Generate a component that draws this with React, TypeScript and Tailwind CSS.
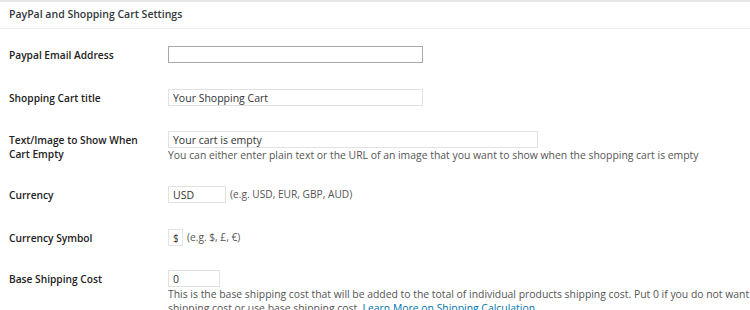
export default function App() {
  return (
    <div className="w-[750px] h-[310px] overflow-hidden bg-white text-[#23282d] font-['Open_Sans',sans-serif]">
      {/* Panel header */}
      <div className="border-t-2 border-[#e5e5e5]">
        <div className="h-[27px] pl-[9px] flex items-center border-b border-[#eeeeee] text-[10.5px] font-semibold text-[#32373c]">
          PayPal and Shopping Cart Settings
        </div>
      </div>

      <div className="flex flex-col">
        <Row label="Paypal Email Address" top="mt-[17px]">
          <input className="w-[255px] h-[17px] border border-[#aaaaaa] bg-white px-[5px] text-[10.5px] outline-none" />
        </Row>

        <Row label="Shopping Cart title" top="mt-[26px]">
          <Field width="w-[255px]" value="Your Shopping Cart" />
        </Row>

        <Row label={<>Text/Image to Show When<br />Cart Empty</>} top="mt-[25px]">
          <Field width="w-[370px]" value="Your cart is empty" />
          <p className="text-[10.4px] leading-[14px] text-[#555] whitespace-nowrap">
            You can either enter plain text or the URL of an image that you want to show when the shopping cart is empty
          </p>
        </Row>

        <Row label="Currency" top="mt-[24px]">
          <div className="flex items-center gap-[4px]">
            <Field width="w-[58px]" value="USD" />
            <span className="text-[10.2px] text-[#555]">(e.g. USD, EUR, GBP, AUD)</span>
          </div>
        </Row>

        <Row label="Currency Symbol" top="mt-[26px]">
          <div className="flex items-center gap-[4px]">
            <Field width="w-[15px]" value="$" />
            <span className="text-[10.2px] text-[#555]">(e.g. $, £, €)</span>
          </div>
        </Row>

        <Row label="Base Shipping Cost" top="mt-[24px]">
          <Field width="w-[52px]" value="0" />
          <p className="text-[10.4px] leading-[14px] text-[#555] whitespace-nowrap">
            This is the base shipping cost that will be added to the total of individual products shipping cost. Put 0 if you do not want to charge base
            <br />
            shipping cost or use base shipping cost.{" "}
            <a className="text-[#0073aa]" href="#">Learn More on Shipping Calculation</a>
          </p>
        </Row>
      </div>
    </div>
  );
}

function Row({ label, top, children }: { label: React.ReactNode; top: string; children: React.ReactNode }) {
  return (
    <div className={`flex items-start ${top}`}>
      <div className="w-[168px] shrink-0 pl-[9px] pt-[2px] text-[10.2px] leading-[14px] font-semibold text-[#222]">
        {label}
      </div>
      <div className="flex flex-col items-start">{children}</div>
    </div>
  );
}

function Field({ width, value }: { width: string; value: string }) {
  return (
    <input
      readOnly
      value={value}
      className={`${width} h-[17px] border border-[#e2e2e2] bg-white px-[4px] text-[10.5px] text-[#333] outline-none`}
    />
  );
}
